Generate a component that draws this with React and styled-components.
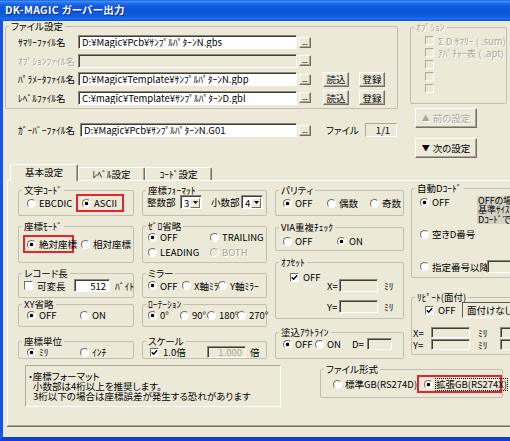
import React from 'react';
import styled, { createGlobalStyle, css } from 'styled-components';

const FACE = '#ece9d8';
const SHADOW = '#aca899';
const DARK = '#716f64';
const GRAY = '#aca899';

const GlobalStyle = createGlobalStyle`
  * { box-sizing: border-box; }
  html, body { margin: 0; padding: 0; background: ${FACE}; }
  body {
    font-family: "Noto Sans CJK JP", "Liberation Sans", sans-serif;
    font-size: 9.5px;
    line-height: 12px;
    font-feature-settings: "palt" 1;
    color: #000;
  }
`;

const disabledText = css`
  color: ${GRAY};
  text-shadow: 1px 1px 0 #fff;
`;

const Window = styled.div`
  width: 510px;
  height: 441px;
  overflow: hidden;
  display: flex;
  flex-direction: column;
  background: ${FACE};
`;

const TitleBar = styled.div`
  flex: none;
  height: 21px;
  display: flex;
  align-items: center;
  padding: 0 0 1px 5px;
  background: linear-gradient(180deg, #0a5ee6 0%, #4892f7 6%, #2a78ee 12%, #0f5bdf 28%, #0a55d8 55%, #0e5fe6 80%, #1c6ef2 90%, #0c4fd2 100%);
`;

const TitleText = styled.span`
  color: #fff;
  font-weight: 700;
  font-size: 10.5px;
  letter-spacing: 0.3px;
  text-shadow: 1px 1px 0 #0c2a8c;
`;

const Frame = styled.div`
  flex: 1;
  min-height: 0;
  display: flex;
  flex-direction: column;
  padding-left: 2px;
  border-left: 3px solid #1a55dc;
  border-bottom: 4px solid #0f3fcf;
`;

const TopRow = styled.div`
  flex: none;
  display: flex;
  align-items: flex-start;
`;

const Stack = styled.div`
  flex: none;
  display: flex;
  flex-direction: column;
  align-items: flex-start;
  margin-left: ${(p) => p.$ml || 0}px;
`;

const Fieldset = styled.fieldset`
  flex: none;
  min-width: 0;
  margin: ${(p) => p.$mt || 0}px 0 0 ${(p) => p.$ml || 0}px;
  padding: 0;
  width: ${(p) => p.$w}px;
  height: ${(p) => p.$h}px;
  border: 1px solid #c2bfb0;
  border-radius: 2px;
`;

const Legend = styled.legend`
  padding: 0 2px;
  margin-left: 3px;
  height: 10px;
  line-height: 10px;
  white-space: nowrap;
  ${(p) => p.$disabled && disabledText}
`;

const GroupBody = styled.div`
  display: flex;
  flex-direction: column;
  align-items: flex-start;
  padding: ${(p) => p.$pt || 0}px 0 0 ${(p) => p.$pl || 0}px;
`;

function Group({ title, w, h, mt, ml, pt, pl, disabled, children }) {
  return (
    <Fieldset $w={w} $h={h} $mt={mt} $ml={ml}>
      <Legend $disabled={disabled}>{title}</Legend>
      <GroupBody $pt={pt} $pl={pl}>{children}</GroupBody>
    </Fieldset>
  );
}

const Row = styled.div`
  flex: none;
  display: flex;
  align-items: ${(p) => (p.$top ? 'flex-start' : 'center')};
  height: ${(p) => (p.$h ?? 12)}px;
  margin-top: ${(p) => p.$mt || 0}px;
  margin-left: ${(p) => p.$ml || 0}px;
`;

const Text = styled.span`
  flex: none;
  white-space: nowrap;
  width: ${(p) => (p.$w ? `${p.$w}px` : 'auto')};
  margin-left: ${(p) => p.$ml || 0}px;
  ${(p) => p.$disabled && disabledText}
`;

const Choice = styled.span`
  flex: none;
  display: inline-flex;
  align-items: center;
  white-space: nowrap;
  height: 12px;
  line-height: 12px;
  width: ${(p) => (p.$w ? `${p.$w}px` : 'auto')};
  ${(p) => p.$disabled && disabledText}
  ${(p) =>
    p.$mark != null &&
    css`
      height: 18px;
      border: 2px solid #e3262c;
      padding: 1px 4px 1px ${p.$mark}px;
      margin: -3px 0;
    `}
`;

const RadioMark = styled.span`
  flex: none;
  width: 9px;
  height: 9px;
  border-radius: 50%;
  margin-right: 3px;
  border: 1px solid;
  border-color: ${DARK} #fff #fff ${DARK};
  background: ${(p) => (p.$on ? 'radial-gradient(circle at 50% 50%, #000 0 1.5px, #fff 2.1px)' : '#fff')};
  ${(p) =>
    p.$disabled &&
    css`
      border-color: ${SHADOW} #fff #fff ${SHADOW};
      background: ${FACE};
    `}
`;

const CheckMark = styled.span`
  flex: none;
  width: 9px;
  height: 9px;
  margin-right: 4px;
  border: 1px solid;
  border-color: ${DARK} #fff #fff ${DARK};
  background: ${(p) => (p.$disabled ? FACE : '#fff')};
  display: flex;
  align-items: center;
  justify-content: center;
  ${(p) => p.$disabled && css`border-color: ${SHADOW} #fff #fff ${SHADOW};`}
`;

const FocusText = styled.span`
  outline: 1px dotted #000;
  outline-offset: 0;
  line-height: 11px;
`;

function Radio({ on, disabled, w, mark, focus, children }) {
  return (
    <Choice $w={w} $mark={mark} $disabled={disabled}>
      <RadioMark $on={on} $disabled={disabled} />
      {focus ? <FocusText>{children}</FocusText> : children}
    </Choice>
  );
}

function Check({ on, disabled, w, children }) {
  return (
    <Choice $w={w} $disabled={disabled}>
      <CheckMark $disabled={disabled}>
        {on && (
          <svg width="7" height="7" viewBox="0 0 7 7">
            <path d="M0.8 3.2 L2.6 5.2 L6.2 1.2" fill="none" stroke="#000" strokeWidth="1.4" />
          </svg>
        )}
      </CheckMark>
      {children}
    </Choice>
  );
}

const Field = styled.div`
  flex: none;
  width: ${(p) => p.$w}px;
  height: ${(p) => (p.$h ?? 14)}px;
  margin-left: ${(p) => p.$ml || 0}px;
  display: flex;
  align-items: center;
  justify-content: ${(p) => (p.$right ? 'flex-end' : 'flex-start')};
  padding: 0 3px;
  overflow: hidden;
  white-space: nowrap;
  line-height: 10px;
  border: 1px solid;
  border-color: #8b887c #fff #fff #8b887c;
  box-shadow: inset 1px 1px 0 #3f3e39;
  background: ${(p) => (p.$disabled ? FACE : '#fff')};
  ${(p) => p.$disabled && css`color: ${GRAY};`}
`;

const StaticBox = styled.div`
  flex: none;
  width: ${(p) => p.$w}px;
  height: ${(p) => p.$h}px;
  margin-left: ${(p) => p.$ml || 0}px;
  display: flex;
  align-items: center;
  justify-content: ${(p) => (p.$center ? 'center' : 'flex-start')};
  padding-left: 4px;
  white-space: nowrap;
  overflow: hidden;
  border: 1px solid;
  border-color: ${(p) => (p.$deep ? '#5e5c54' : SHADOW)} #fff #fff ${(p) => (p.$deep ? '#5e5c54' : SHADOW)};
  background: ${FACE};
`;

const PushButton = styled.button`
  flex: none;
  font: inherit;
  line-height: 12px;
  padding: 0;
  margin: ${(p) => p.$mt || 0}px 0 0 ${(p) => p.$ml || 0}px;
  width: ${(p) => p.$w}px;
  height: ${(p) => p.$h}px;
  background: ${FACE};
  color: #000;
  border: 1px solid;
  border-color: #fff ${DARK} ${DARK} #fff;
  box-shadow: inset -1px -1px 0 ${SHADOW};
  display: flex;
  align-items: center;
  justify-content: center;
  gap: 3px;
  ${(p) => p.disabled && disabledText}
`;

const DotsButton = styled(PushButton)`
  align-items: flex-end;
  justify-content: flex-start;
  padding: 0 0 1px 2px;
  font-size: 8px;
  line-height: 8px;
  letter-spacing: -0.5px;
  color: #000;
  text-shadow: none;
`;

const Arrow = styled.span`
  font-size: 8px;
  line-height: 8px;
`;

const FileRows = styled.div`
  display: flex;
  flex-direction: column;
  gap: 4.5px;
`;

const OptionRows = styled.div`
  display: flex;
  flex-direction: column;
  gap: 1px;
`;

const TabStrip = styled.div`
  flex: none;
  position: relative;
  z-index: 1;
  display: flex;
  align-items: flex-end;
  margin: 6px 0 0 5px;
`;

const Tab = styled.div`
  flex: none;
  width: ${(p) => (p.$active ? 68 : 67)}px;
  height: ${(p) => (p.$active ? 17 : 13)}px;
  margin-bottom: ${(p) => (p.$active ? -1 : 0)}px;
  padding-bottom: ${(p) => (p.$active ? 2 : 0)}px;
  background: ${FACE};
  border-top: 1px solid #fff;
  border-left: 1px solid #fff;
  border-right: 1px solid ${DARK};
  box-shadow: inset -1px 0 0 ${SHADOW};
  border-radius: 2px 2px 0 0;
  display: flex;
  align-items: center;
  justify-content: center;
`;

const Panel = styled.div`
  flex: none;
  margin-left: 2px;
  width: 530px;
  height: 246px;
  border-top: 1px solid #fff;
  border-left: 1px solid #fff;
  border-bottom: 1px solid ${SHADOW};
  box-shadow: 0 1px 0 ${DARK};
  display: flex;
  flex-direction: column;
`;

const Columns = styled.div`
  flex: none;
  display: flex;
  align-items: flex-start;
  padding-left: 10px;
`;

const Column = styled.div`
  flex: none;
  display: flex;
  flex-direction: column;
  margin-left: ${(p) => p.$ml || 0}px;
`;

const Split = styled.div`
  display: flex;
  align-items: flex-start;
`;

const SubStack = styled.div`
  flex: none;
  display: flex;
  flex-direction: column;
  width: ${(p) => (p.$w ? `${p.$w}px` : 'auto')};
  padding-top: ${(p) => p.$pt || 0}px;
`;

const SelectBox = styled.div`
  flex: none;
  width: 22px;
  height: 14px;
  margin-left: 3px;
  border: 1px solid;
  border-color: #8b887c #fff #fff #8b887c;
  box-shadow: inset 1px 1px 0 #3f3e39;
  background: #fff;
  display: flex;
  align-items: center;
  justify-content: space-between;
  padding: 1px 1px 0 3px;
  line-height: 10px;
`;

const SelectArrow = styled.span`
  flex: none;
  width: 10px;
  height: 10px;
  background: ${FACE};
  border: 1px solid;
  border-color: #fff ${DARK} ${DARK} #fff;
  display: flex;
  align-items: center;
  justify-content: center;
`;

function Select({ value }) {
  return (
    <SelectBox>
      {value}
      <SelectArrow>
        <svg width="5" height="3" viewBox="0 0 5 3">
          <path d="M0 0 H5 L2.5 3 Z" fill="#000" />
        </svg>
      </SelectArrow>
    </SelectBox>
  );
}

const Desc = styled.div`
  flex: none;
  width: 40px;
  height: 28px;
  background: #d3d0c4;
  padding: 0 0 0 1px;
  font-size: 9px;
  line-height: 9.3px;
  white-space: nowrap;
  overflow: hidden;
`;

const BottomRow = styled.div`
  flex: none;
  display: flex;
  align-items: flex-start;
`;

const NoteBox = styled.div`
  flex: none;
  width: 256px;
  height: 42px;
  margin: 6px 0 0 17px;
  padding: 5px 0 0 2px;
  border: 1px solid;
  border-color: ${SHADOW} #fff #fff ${SHADOW};
  line-height: 10px;
  white-space: nowrap;
`;

const NoteLine = styled.div`
  padding-left: ${(p) => p.$indent || 0}px;
`;

export default function App() {
  return (
    <>
      <GlobalStyle />
      <Window>
        <TitleBar>
          <TitleText>DK-MAGIC ガーバー出力</TitleText>
        </TitleBar>
        <Frame>
          <TopRow>
            <Stack>
              <Group title="ファイル設定" w={393} h={88} pt={4} pl={12}>
                <FileRows>
                  <Row $h={14}>
                    <Text $w={60}>ｻﾏﾘｰﾌｧｲﾙ名</Text>
                    <Field $w={219}>D:¥Magic¥Pcb¥ｻﾝﾌﾟﾙﾊﾟﾀｰﾝN.gbs</Field>
                    <DotsButton $ml={2} $w={12} $h={11}>...</DotsButton>
                  </Row>
                  <Row $h={14}>
                    <Text $w={60} $disabled>ｵﾌﾟｼｮﾝﾌｧｲﾙ名</Text>
                    <Field $w={219} $disabled />
                    <DotsButton $ml={2} $w={12} $h={11} disabled>...</DotsButton>
                  </Row>
                  <Row $h={14}>
                    <Text $w={60}>ﾊﾟﾗﾒｰﾀﾌｧｲﾙ名</Text>
                    <Field $w={219}>D:¥Magic¥Template¥ｻﾝﾌﾟﾙﾊﾟﾀｰﾝN.gbp</Field>
                    <DotsButton $ml={2} $w={12} $h={11}>...</DotsButton>
                    <PushButton $ml={12} $w={26} $h={15}>読込</PushButton>
                    <PushButton $ml={10} $w={26} $h={15}>登録</PushButton>
                  </Row>
                  <Row $h={14}>
                    <Text $w={60}>ﾚﾍﾞﾙﾌｧｲﾙ名</Text>
                    <Field $w={219}>C:¥magic¥Template¥ｻﾝﾌﾟﾙﾊﾟﾀｰﾝD.gbl</Field>
                    <DotsButton $ml={2} $w={12} $h={11}>...</DotsButton>
                    <PushButton $ml={12} $w={26} $h={15}>読込</PushButton>
                    <PushButton $ml={10} $w={26} $h={15}>登録</PushButton>
                  </Row>
                </FileRows>
              </Group>
              <Row $h={14} $mt={14} $ml={13}>
                <Text $w={62}>ｶﾞｰﾊﾞｰﾌｧｲﾙ名</Text>
                <Field $w={217}>D:¥Magic¥Pcb¥ｻﾝﾌﾟﾙﾊﾟﾀｰﾝN.G01</Field>
                <DotsButton $ml={2} $w={12} $h={11}>...</DotsButton>
                <Text $ml={15} $w={39}>ファイル</Text>
                <StaticBox $w={32} $h={14} $center>1/1</StaticBox>
              </Row>
            </Stack>
            <Stack $ml={12}>
              <Group title="ｵﾌﾟｼｮﾝ" disabled w={97} h={82} mt={1} pt={3} pl={14}>
                <OptionRows>
                  <Row $h={11}><Check disabled>Σ D ｻﾏﾘｰ ( .sum)</Check></Row>
                  <Row $h={11}><Check disabled>ｱﾊﾟﾁｬｰ表 ( .apt)</Check></Row>
                  <Row $h={11}><Check disabled /></Row>
                  <Row $h={11}><Check disabled /></Row>
                  <Row $h={11}><Check disabled /></Row>
                </OptionRows>
              </Group>
              <PushButton $w={62} $h={20} $mt={4} $ml={5} disabled>
                <Arrow>▲</Arrow>前の設定
              </PushButton>
              <PushButton $w={62} $h={20} $mt={10} $ml={5}>
                <Arrow>▼</Arrow>次の設定
              </PushButton>
            </Stack>
          </TopRow>

          <TabStrip>
            <Tab $active>基本設定</Tab>
            <Tab>ﾚﾍﾞﾙ設定</Tab>
            <Tab>ｺｰﾄﾞ設定</Tab>
          </TabStrip>

          <Panel>
            <Columns>
              <Column>
                <Group title="文字ｺｰﾄﾞ" w={116} h={31} mt={4} pt={2} pl={8}>
                  <Row>
                    <Radio w={49}>EBCDIC</Radio>
                    <Radio on mark={4} w={48}>ASCII</Radio>
                  </Row>
                </Group>
                <Group title="座標ﾓｰﾄﾞ" w={116} h={42} mt={5} pt={7} pl={4}>
                  <Row>
                    <Radio on mark={2} w={51}>絶対座標</Radio>
                    <Text $w={7} />
                    <Radio>相対座標</Radio>
                  </Row>
                </Group>
                <Group title="レコード長" w={116} h={30} mt={5} pt={1} pl={5}>
                  <Row $h={13}>
                    <Check w={50}>可変長</Check>
                    <Field $w={36} $h={13} $right>512</Field>
                    <Text $ml={5}>ﾊﾞｲﾄ</Text>
                  </Row>
                </Group>
                <Group title="XY省略" w={116} h={28} mt={1} pt={0} pl={8}>
                  <Row>
                    <Radio on w={53}>OFF</Radio>
                    <Radio>ON</Radio>
                  </Row>
                </Group>
                <Group title="座標単位" w={116} h={23} mt={9} pt={0} pl={8}>
                  <Row>
                    <Radio on w={53}>ﾐﾘ</Radio>
                    <Radio>ｲﾝﾁ</Radio>
                  </Row>
                </Group>
              </Column>

              <Column $ml={8}>
                <Group title="座標ﾌｫｰﾏｯﾄ" w={125} h={31} mt={4} pt={0} pl={4}>
                  <Row $h={14}>
                    <Text $w={30}>整数部</Text>
                    <Select value="3" />
                    <Text $ml={9} $w={27}>小数部</Text>
                    <Select value="4" />
                  </Row>
                </Group>
                <Group title="ｾﾞﾛ省略" w={125} h={42} mt={5} pt={0} pl={5}>
                  <Row>
                    <Radio on w={62}>OFF</Radio>
                    <Radio>TRAILING</Radio>
                  </Row>
                  <Row $mt={3}>
                    <Radio w={62}>LEADING</Radio>
                    <Radio disabled>BOTH</Radio>
                  </Row>
                </Group>
                <Group title="ミラー" w={125} h={30} mt={5} pt={1} pl={5}>
                  <Row $h={13}>
                    <Radio on w={34}>OFF</Radio>
                    <Radio w={36}>X軸ﾐﾗｰ</Radio>
                    <Radio>Y軸ﾐﾗｰ</Radio>
                  </Row>
                </Group>
                <Group title="ﾛｰﾃｰｼｮﾝ" w={125} h={28} mt={1} pt={0} pl={5}>
                  <Row>
                    <Radio on w={32}>0°</Radio>
                    <Radio w={27}>90°</Radio>
                    <Radio w={30}>180°</Radio>
                    <Radio>270°</Radio>
                  </Row>
                </Group>
                <Group title="スケール" w={125} h={23} mt={9} pt={0} pl={7}>
                  <Row>
                    <Check on w={57}>1.0倍</Check>
                    <Field $w={39} $h={12} $right $disabled>1.000</Field>
                    <Text $ml={4}>倍</Text>
                  </Row>
                </Group>
              </Column>

              <Column $ml={8}>
                <Group title="パリティ" w={129} h={31} mt={4} pt={2} pl={7}>
                  <Row>
                    <Radio on w={44}>OFF</Radio>
                    <Radio w={43}>偶数</Radio>
                    <Radio>奇数</Radio>
                  </Row>
                </Group>
                <Group title="VIA重複ﾁｪｯｸ" w={129} h={29} mt={6} pt={3} pl={7}>
                  <Row>
                    <Radio w={54}>OFF</Radio>
                    <Radio on>ON</Radio>
                  </Row>
                </Group>
                <Group title="ｵﾌｾｯﾄ" w={129} h={62} mt={6} pt={0} pl={14}>
                  <Split>
                    <SubStack $w={37} $pt={4}>
                      <Row>
                        <Check on>OFF</Check>
                      </Row>
                    </SubStack>
                    <SubStack $pt={12}>
                      <Row $h={13}>
                        <Text $w={12}>X=</Text>
                        <Field $w={39} $h={13} $disabled />
                        <Text $ml={6}>ﾐﾘ</Text>
                      </Row>
                      <Row $h={13} $mt={8}>
                        <Text $w={12}>Y=</Text>
                        <Field $w={39} $h={13} $disabled />
                        <Text $ml={6}>ﾐﾘ</Text>
                      </Row>
                    </SubStack>
                  </Split>
                </Group>
                <Group title="塗込ｱｳﾄﾗｲﾝ" w={129} h={32} mt={8} pt={1} pl={7}>
                  <Row>
                    <Radio on w={32}>OFF</Radio>
                    <Radio w={37}>ON</Radio>
                    <Text $w={15}>D=</Text>
                    <Field $w={25} $h={12} $disabled />
                  </Row>
                </Group>
              </Column>

              <Column $ml={7}>
                <Group title="自動Dｺｰﾄﾞ" w={115} h={95} mt={2} pt={3} pl={8}>
                  <Row $h={28} $top>
                    <Radio on w={57}>OFF</Radio>
                    <Desc>
                      OFFの場合は<br />
                      基準ｻｲｽﾞの<br />
                      Dｺｰﾄﾞでと
                    </Desc>
                  </Row>
                  <Row $mt={4}>
                    <Radio>空きD番号</Radio>
                  </Row>
                  <Row $mt={20} $h={13}>
                    <Radio w={67}>指定番号以降</Radio>
                    <Field $w={30} $h={13} $disabled />
                  </Row>
                </Group>
                <Group title="ﾘﾋﾟｰﾄ(面付)" w={115} h={63} mt={14} pt={0} pl={1}>
                  <Row $h={16} $ml={12}>
                    <Check on w={37}>OFF</Check>
                    <StaticBox $w={55} $h={16} $deep>面付けなし</StaticBox>
                  </Row>
                  <Row $h={11} $mt={9}>
                    <Text $w={18}>X=</Text>
                    <Field $w={39} $h={11} $disabled />
                    <Text $ml={8} $w={22}>ﾐﾘ</Text>
                    <Field $w={30} $h={11} $disabled />
                  </Row>
                  <Row $h={11} $mt={1}>
                    <Text $w={18}>Y=</Text>
                    <Field $w={39} $h={11} $disabled />
                    <Text $ml={8} $w={22}>ﾐﾘ</Text>
                    <Field $w={30} $h={11} $disabled />
                  </Row>
                </Group>
              </Column>
            </Columns>

            <BottomRow>
              <NoteBox>
                <NoteLine>・座標フォーマット</NoteLine>
                <NoteLine $indent={5}>小数部は4桁以上を推奨します。</NoteLine>
                <NoteLine $indent={5}>3桁以下の場合は座標誤差が発生する恐れがあります</NoteLine>
              </NoteBox>
              <Group title="ファイル形式" w={183} h={34} mt={5} ml={39} pt={4} pl={12}>
                <Row>
                  <Radio w={84}>標準GB(RS274D)</Radio>
                  <Radio on focus mark={5} w={85}>拡張GB(RS274X)</Radio>
                </Row>
              </Group>
            </BottomRow>
          </Panel>
        </Frame>
      </Window>
    </>
  );
}
